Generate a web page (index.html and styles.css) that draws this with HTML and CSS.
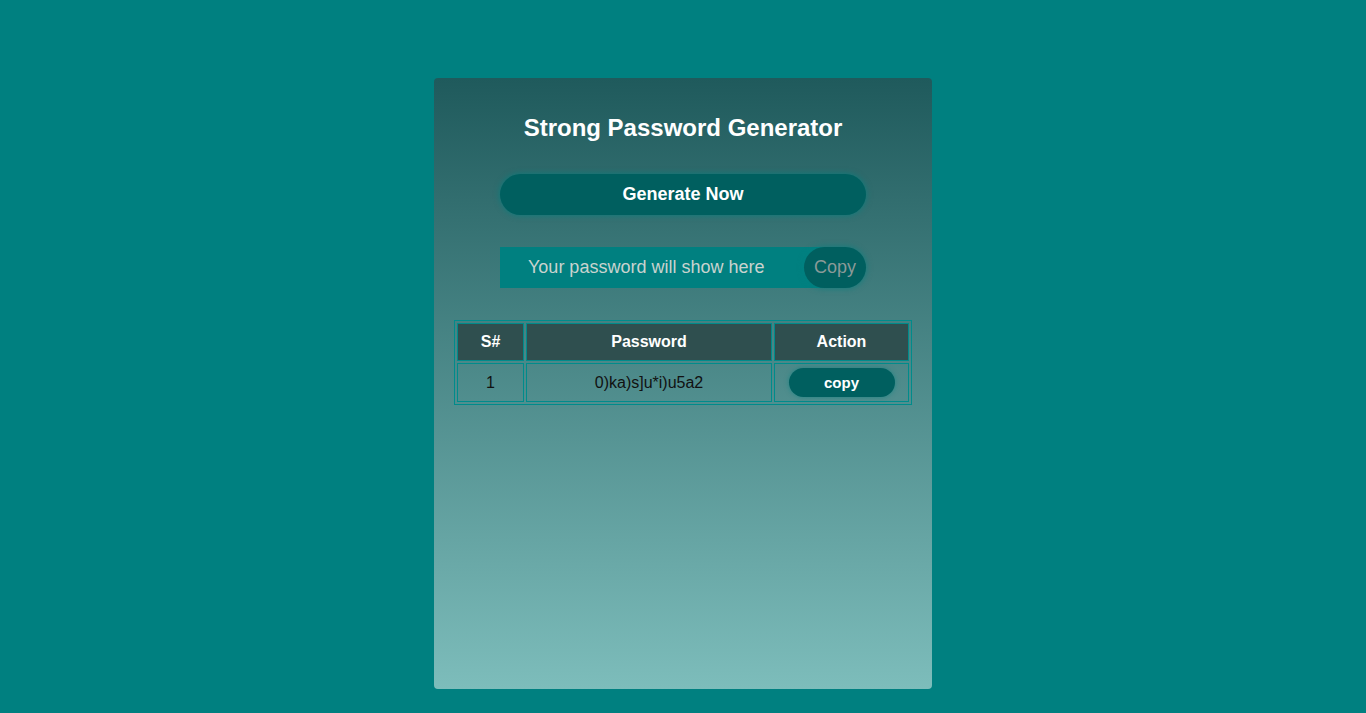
FILE: index.html
```html
<!DOCTYPE html>
<html>
<head>
<meta charset="utf-8">
<link rel="stylesheet" href="styles.css">
</head>
<body>
<div class="page">
  <div class="card">
    <h1 class="title">Strong Password Generator</h1>
    <button class="gen-btn">Generate Now</button>
    <div class="pass-row">
      <input class="pass-input" type="text" placeholder="Your password will show here" readonly>
      <button class="pass-copy">Copy</button>
    </div>
    <table class="history">
      <thead>
        <tr><th class="c-num">S#</th><th class="c-pass">Password</th><th class="c-act">Action</th></tr>
      </thead>
      <tbody>
        <tr><td>1</td><td>0)ka)s]u*i)u5a2</td><td><button class="row-copy">copy</button></td></tr>
      </tbody>
    </table>
  </div>
</div>
</body>
</html>
```
FILE: styles.css
```css
html, body {
  margin: 0;
  padding: 0;
  background: #008080;
  font-family: "Liberation Sans", Arial, sans-serif;
}
.page {
  height: 713px;
  display: flex;
  justify-content: center;
  padding-top: 78px;
  box-sizing: border-box;
}
.card {
  width: 498px;
  height: 611px;
  border-radius: 4px;
  background: linear-gradient(to bottom, #1f5a5c 0%, #7dbdbb 100%);
  display: flex;
  flex-direction: column;
  align-items: center;
  box-sizing: border-box;
  padding-top: 36px;
}
.title {
  margin: 0;
  font-size: 24px;
  line-height: 28px;
  font-weight: bold;
  color: #fff;
}
.gen-btn {
  margin-top: 32px;
  width: 366px;
  height: 41px;
  border: none;
  border-radius: 21px;
  background: #005f5f;
  color: #fff;
  font-family: inherit;
  font-size: 18px;
  font-weight: bold;
  box-shadow: 0 0 6px rgba(0, 128, 128, 0.8);
}
.pass-row {
  margin-top: 32px;
  width: 366px;
  height: 41px;
  display: flex;
}
.pass-input {
  width: 330px;
  height: 41px;
  box-sizing: border-box;
  border: none;
  outline: none;
  background: #008080;
  padding-left: 28px;
  font-family: inherit;
  font-size: 18px;
  color: #fff;
}
.pass-input::placeholder {
  color: #c9d3cf;
}
.pass-copy {
  width: 62px;
  height: 41px;
  margin-left: -26px;
  position: relative;
  border: none;
  border-radius: 21px;
  background: #005f5f;
  color: #8a9a98;
  font-family: inherit;
  font-size: 18px;
  padding: 0;
  box-shadow: 0 0 6px rgba(0, 128, 128, 0.8);
}
.history {
  margin-top: 32px;
  width: 458px;
  border: 1px solid #008b8b;
  border-spacing: 2px;
  font-size: 16px;
}
.history th {
  background: #2f4f4f;
  color: #fff;
  font-weight: bold;
  height: 36px;
  padding: 0;
  border: 1px solid #008b8b;
}
.history td {
  height: 37px;
  padding: 0;
  text-align: center;
  color: #111;
  border: 1px solid #008b8b;
}
.c-num { width: 65px; }
.c-act { width: 133px; }
.row-copy {
  width: 106px;
  height: 29px;
  border: none;
  border-radius: 15px;
  background: #005f5f;
  color: #fff;
  font-family: inherit;
  font-size: 15px;
  font-weight: bold;
  padding: 0;
  vertical-align: middle;
  box-shadow: 0 0 5px rgba(0, 128, 128, 0.6);
}
```
